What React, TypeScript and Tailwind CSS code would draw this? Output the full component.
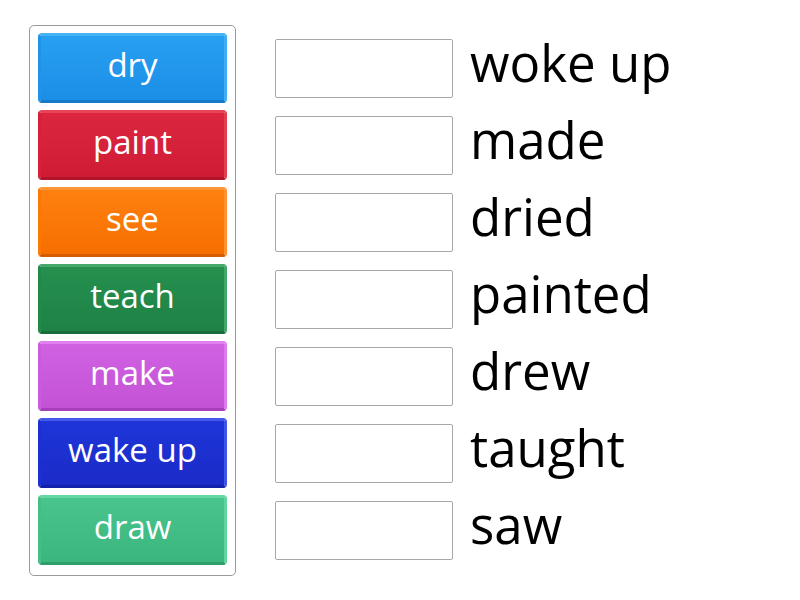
const tiles = [
  { label: "dry", cls: "bg-gradient-to-b from-[#28a0f2] to-[#1b8ee6] border-t-[#47b3f7] border-r-[#3fadf5] border-b-[#1579c9] border-l-[#1e93e8]" },
  { label: "paint", cls: "bg-gradient-to-b from-[#dc2640] to-[#cf1c34] border-t-[#e64559] border-r-[#e2404f] border-b-[#b0132a] border-l-[#d42038]" },
  { label: "see", cls: "bg-gradient-to-b from-[#ff8010] to-[#f66f00] border-t-[#ff9636] border-r-[#ff922e] border-b-[#d65c00] border-l-[#fa7806]" },
  { label: "teach", cls: "bg-gradient-to-b from-[#25904f] to-[#1e8245] border-t-[#47a86c] border-r-[#43a568] border-b-[#176d39] border-l-[#218a4b]" },
  { label: "make", cls: "bg-gradient-to-b from-[#d062e2] to-[#c452d6] border-t-[#df7ff0] border-r-[#dc7aee] border-b-[#a83fba] border-l-[#c95bdc]" },
  { label: "wake up", cls: "bg-gradient-to-b from-[#1f35d8] to-[#1a2bc8] border-t-[#4358e8] border-r-[#3e55e6] border-b-[#1320a8] border-l-[#1c30d2]" },
  { label: "draw", cls: "bg-gradient-to-b from-[#48c48c] to-[#3ab67e] border-t-[#64d7a2] border-r-[#5fd49e] border-b-[#2f9e6b] border-l-[#42be86]" },
];

const answers = ["woke up", "made", "dried", "painted", "drew", "taught", "saw"];

export default function App() {
  return (
    <div className="w-[800px] h-[600px] bg-white flex items-start pt-[25px] pl-[29px] font-['Open_Sans','Noto_Sans',sans-serif]">
      <div className="w-[207px] h-[551px] border border-[#9a9a9a] rounded-[5px] px-[8px] pt-[7px] flex flex-col gap-[7px]">
        {tiles.map((t) => (
          <div
            key={t.label}
            className={`h-[70px] rounded-[4px] border-[3px] flex items-center justify-center text-white text-[33px] leading-none pb-[8px] ${t.cls}`}
          >
            {t.label}
          </div>
        ))}
      </div>

      <div className="ml-[39px] pt-[8px] flex flex-col gap-[7px]">
        {answers.map((a) => (
          <div key={a} className="h-[70px] flex items-center">
            <div className="w-[178px] h-[59px] border border-[#a8a8a8] rounded-[2px] bg-white" />
            <div className="ml-[17px] text-[51px] leading-none text-black pb-[12px]">{a}</div>
          </div>
        ))}
      </div>
    </div>
  );
}
